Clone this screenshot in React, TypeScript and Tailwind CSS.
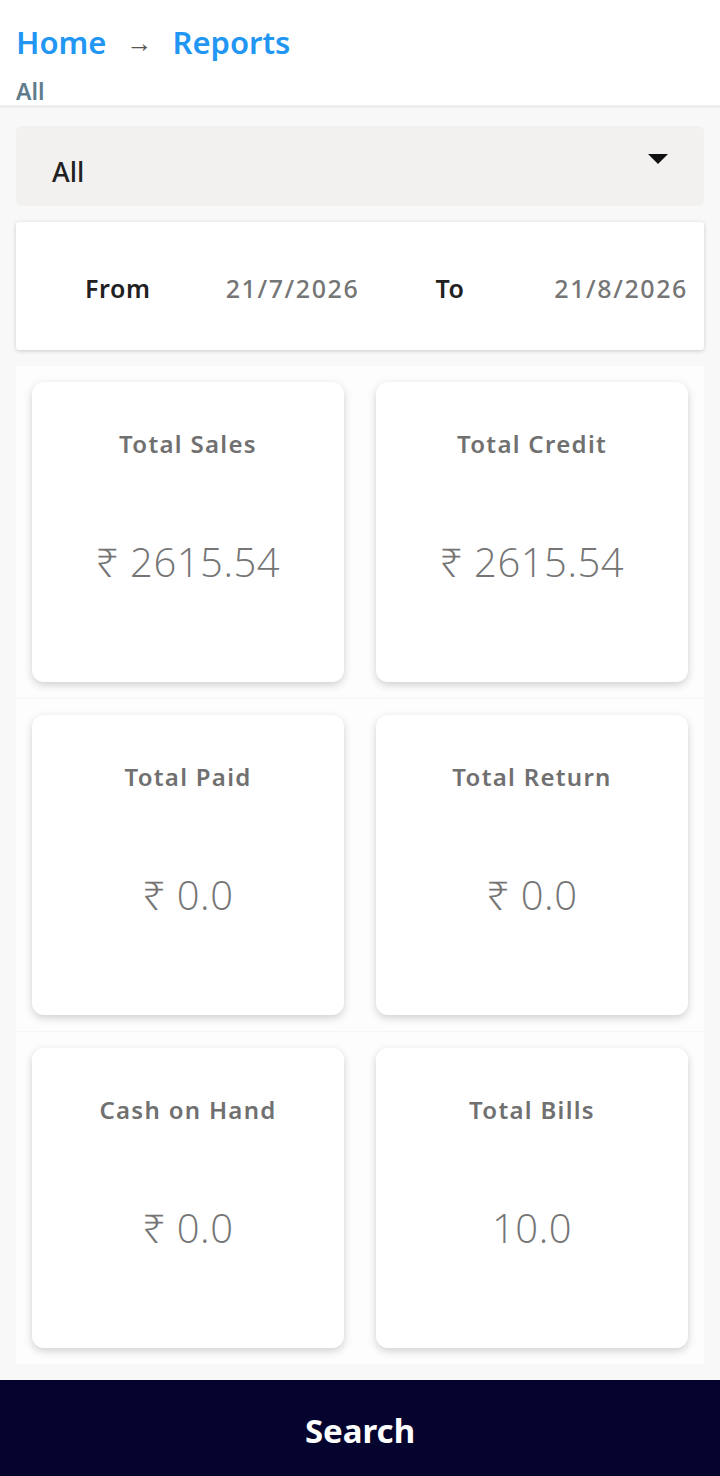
import React from "react";

const stats = [
  [
    { label: "Total Sales", value: "₹ 2615.54" },
    { label: "Total Credit", value: "₹ 2615.54" },
  ],
  [
    { label: "Total Paid", value: "₹ 0.0" },
    { label: "Total Return", value: "₹ 0.0" },
  ],
  [
    { label: "Cash on Hand", value: "₹ 0.0" },
    { label: "Total Bills", value: "10.0" },
  ],
];

function StatCard({ label, value }: { label: string; value: string }) {
  return (
    <div className="flex-1 h-[300px] bg-white rounded-[12px] shadow-[0_3px_8px_rgba(0,0,0,0.18)] flex flex-col items-center">
      <div className="mt-[44px] text-[24px] font-semibold text-[#707070] tracking-[1.3px]">{label}</div>
      <div className="mt-[70px] text-[40px] font-light text-[#757575] tracking-[0.5px] font-['Open_Sans','Noto_Sans',sans-serif]">{value}</div>
    </div>
  );
}

export default function App() {
  return (
    <div className="w-[720px] h-[1476px] bg-[#f8f8f8] flex flex-col font-['Noto_Sans','Open_Sans',sans-serif]">
      <header className="bg-white h-[108px] border-b-[3px] border-[#eeeeee] px-4 pt-[22px]">
        <div className="flex items-center text-[31px] font-semibold text-[#2196f3] leading-[40px]">
          <span>Home</span>
          <span className="mx-[20px] text-[26px] text-[#555] font-normal">→</span>
          <span>Reports</span>
        </div>
        <div className="text-[23px] font-semibold text-[#607d8b] leading-[26px] mt-[16px]">All</div>
      </header>

      <main className="flex-1 px-4 pt-[18px]">
        <div className="h-[80px] bg-[#f2f1f0] rounded-[6px] flex items-center justify-between pl-[36px] pr-[36px]">
          <span className="text-[27px] font-medium text-[#212121] mt-[12px]">All</span>
          <svg width="20" height="10" viewBox="0 0 20 10" className="-mt-[14px]">
            <path d="M0 0 L20 0 L10 10 Z" fill="#111" />
          </svg>
        </div>

        <div className="mt-4 h-[128px] bg-white rounded-[3px] shadow-[0_1px_4px_rgba(0,0,0,0.18)] flex items-center text-[25px] tracking-[0.6px] pt-[6px]">
          <span className="ml-[69px] font-semibold text-[#212121]">From</span>
          <span className="ml-[75px] text-[#757575] font-medium tracking-[1.6px]">21/7/2026</span>
          <span className="ml-[76px] font-semibold text-[#212121]">To</span>
          <span className="ml-auto mr-[16px] text-[#757575] font-medium tracking-[1.6px]">21/8/2026</span>
        </div>

        <div className="mt-4 bg-[#fdfdfd]">
          {stats.map((row, i) => (
            <div key={i} className="flex gap-8 p-4 border-t border-[#f6f6f6] first:border-t-0">
              {row.map((s) => (
                <StatCard key={s.label} label={s.label} value={s.value} />
              ))}
            </div>
          ))}
        </div>
      </main>

      <button className="h-[96px] w-full bg-[#04042f] text-white text-[33px] font-bold">
        <span className="relative top-[3px]">Search</span>
      </button>
    </div>
  );
}
